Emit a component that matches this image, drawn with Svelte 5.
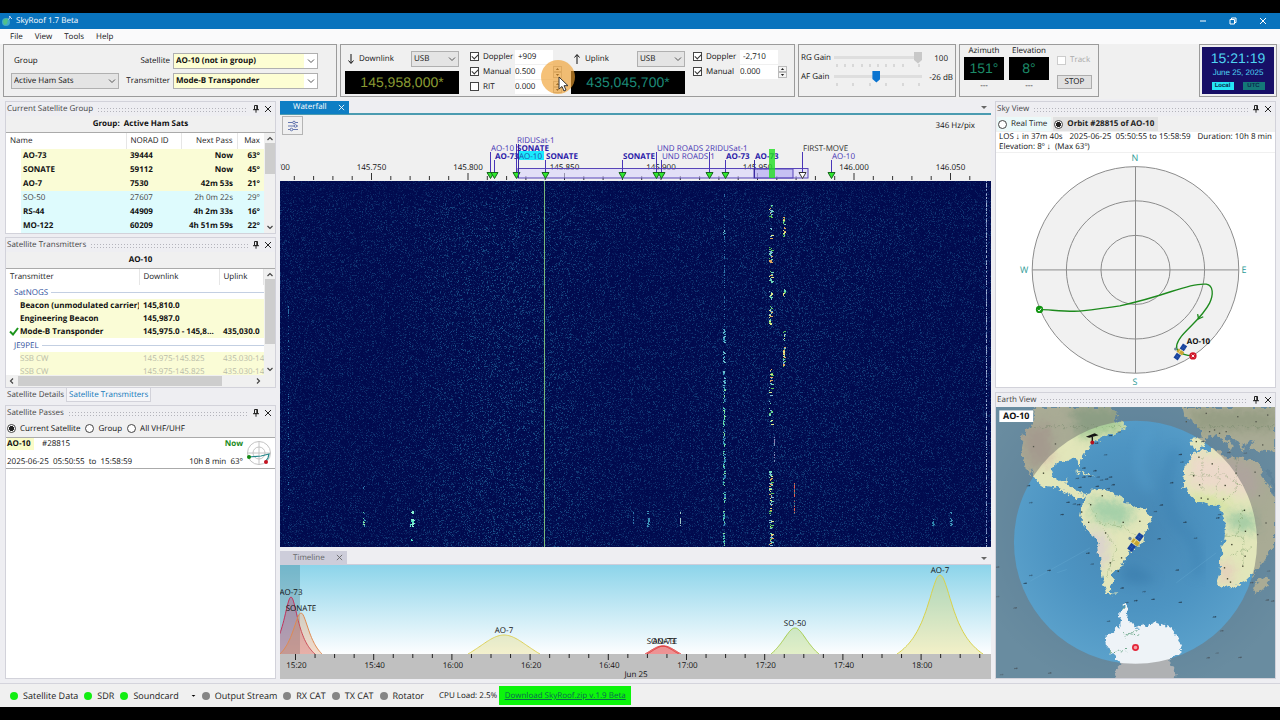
<script lang="ts">
    import { onMount } from "svelte";

    const groupSats = [
        { name: "AO-73", id: "39444", pass: "Now", max: "63°", band: "vhf" },
        { name: "SONATE", id: "59112", pass: "Now", max: "45°", band: "vhf" },
        { name: "AO-7", id: "7530", pass: "42m 53s", max: "21°", band: "vhf" },
        { name: "SO-50", id: "27607", pass: "2h 0m 22s", max: "29°", band: "uhf", dim: true },
        { name: "RS-44", id: "44909", pass: "4h 2m 33s", max: "16°", band: "uhf" },
        { name: "MO-122", id: "60209", pass: "4h 51m 59s", max: "22°", band: "uhf" },
    ];

    const transmitters = [
        {
            source: "SatNOGS",
            rows: [
                { name: "Beacon (unmodulated carrier)", down: "145,810.0", up: "" },
                { name: "Engineering Beacon", down: "145,987.0", up: "" },
                { name: "Mode-B Transponder", down: "145,975.0 - 145,8...", up: "435,030.0", active: true },
            ],
        },
        {
            source: "JE9PEL",
            rows: [
                { name: "SSB CW", down: "145.975-145.825", up: "435.030-146", dim: true },
                { name: "SSB CW", down: "145.975-145.825", up: "435.030-146", dim: true },
            ],
        },
    ];

    const statuses = [
        { label: "Satellite Data", on: true },
        { label: "SDR", on: true },
        { label: "Soundcard", on: true, menu: true },
        { label: "Output Stream", on: false },
        { label: "RX CAT", on: false },
        { label: "TX CAT", on: false },
        { label: "Rotator", on: false },
    ];

    // frequency scale, x in scale units
    const freqTicks = Array.from({ length: 37 }, (_, i) => ({
        x: -5 + i * 19.3,
        major: i % 5 === 0,
        label: (145.7 + (i / 5) * 0.05).toFixed(3),
    }));
    const markers = [
        { x: 210, top: 38 },
        { x: 214, top: 46 },
        { x: 236, top: 30 },
        { x: 265, top: 46 },
        { x: 342, top: 46 },
        { x: 376, top: 38 },
        { x: 381, top: 46 },
        { x: 429, top: 38 },
        { x: 445, top: 46 },
        { x: 522, top: 38, open: true },
        { x: 551, top: 46 },
    ];
    const markerLabels = [
        { x: 237, y: 29, text: "RIDUSat-1" },
        { x: 211, y: 37, text: "AO-10" },
        { x: 237, y: 37, text: "SONATE", bold: true },
        { x: 215, y: 45, text: "AO-73", bold: true },
        { x: 239, y: 45, text: "AO-10", lit: true },
        { x: 266, y: 45, text: "SONATE", bold: true },
        { x: 343, y: 45, text: "SONATE", bold: true },
        { x: 377, y: 37, text: "UND ROADS 2" },
        { x: 382, y: 45, text: "UND ROADS 1" },
        { x: 430, y: 37, text: "RIDUSat-1" },
        { x: 446, y: 45, text: "AO-73", bold: true },
        { x: 475, y: 45, text: "AO-73", bold: true },
        { x: 523, y: 37, text: "FIRST-MOVE", dark: true },
        { x: 552, y: 45, text: "AO-10" },
    ];

    const passes = [
        { name: "AO-73", x: 11, top: 32, half: 24, sharp: 0.3, color: "#c2325c" },
        { name: "SONATE", x: 21, top: 48, half: 21, sharp: 0.4, color: "#e08a50" },
        { name: "AO-7", x: 224, top: 70, half: 36, sharp: 0.9, color: "#ded25a" },
        { name: "AO-73", x: 384, top: 81, half: 17, sharp: 1, color: "#e03030" },
        { name: "SONATE", x: 382, top: 81, half: 17, sharp: 1, color: "#e03030" },
        { name: "SO-50", x: 515, top: 63, half: 24, sharp: 0.6, color: "#a5cc4a" },
        { name: "AO-7", x: 660, top: 10, half: 43, sharp: 0.3, color: "#d9d24a" },
    ];
    // elevation curve of a pass over the horizon at y = 89
    const passPath = (p: (typeof passes)[number]) => {
        const elevation = (u: number) => 1 / Math.sqrt(1 + (u / p.sharp) ** 2);
        const floor = elevation(1);
        const points: string[] = [];
        for (let i = -30; i <= 30; i++) {
            const e = (elevation(i / 30) - floor) / (1 - floor);
            points.push(`${(p.x + (p.half * i) / 30).toFixed(1)} ${(89 - (89 - p.top) * e).toFixed(1)}`);
        }
        return "M" + points.join("L");
    };
    const timeTicks = Array.from({ length: 36 }, (_, i) => {
        const minutes = 15 * 60 + 20 + i * 5;
        return {
            x: 15.5 + i * 19.55,
            major: i % 4 === 0,
            label: `${Math.floor(minutes / 60)}:${String(minutes % 60).padStart(2, "0")}`,
        };
    });

    // island and city name marks on the map
    const mapMarks = [
        [347, 195], [282, 235], [315, 243], [262, 266], [282, 262], [300, 260], [325, 262], [350, 268],
        [362, 262], [335, 271], [270, 293], [322, 290], [355, 297], [370, 285], [115, 288], [122, 339],
        [216, 375], [234, 338], [253, 343], [266, 345], [515, 346], [497, 366], [586, 398], [508, 448],
        [618, 446], [563, 542], [294, 491], [307, 524], [177, 543], [105, 582], [122, 558], [75, 656],
        [397, 596], [463, 607], [490, 630], [438, 634], [411, 640], [572, 639], [675, 683], [356, 696],
        [697, 725], [656, 806], [683, 792], [752, 805], [77, 838], [34, 857], [179, 852], [22, 533],
        [22, 622], [546, 279], [572, 194], [577, 217], [685, 385], [787, 580], [838, 545], [850, 635],
        [834, 632], [768, 190], [718, 188], [640, 155], [388, 126], [362, 137], [320, 160], [690, 375],
    ];
    const landMarks = [
        [160, 250], [196, 162], [130, 170], [337, 318], [302, 345], [275, 367], [296, 398], [347, 430],
        [400, 398], [450, 395], [395, 505], [361, 520], [385, 545], [612, 258], [668, 222], [707, 287],
        [655, 328], [702, 328], [740, 250], [797, 247], [810, 318], [765, 362], [768, 425], [727, 465],
        [767, 500], [760, 530], [714, 568], [723, 578], [705, 535], [628, 202], [675, 120], [710, 125],
        [650, 70], [745, 80], [800, 95], [820, 165], [835, 75], [620, 155], [660, 125], [690, 130],
        [590, 95], [830, 400], [635, 325], [630, 285], [805, 435],
    ];

    let canvas: HTMLCanvasElement;

    onMount(() => {
        const w = (canvas.width = canvas.clientWidth);
        const h = (canvas.height = canvas.clientHeight);
        const ctx = canvas.getContext("2d")!;
        let seed = 1717;
        const rnd = () => {
            seed = (seed * 1664525 + 1013904223) >>> 0;
            return seed / 4294967296;
        };
        const image = ctx.createImageData(w, h);
        for (let y = 0; y < h; y++) {
            for (let x = 0; x < w; x++) {
                const i = (y * w + x) * 4;
                const f = x / w;
                const gain = 0.45 + 0.28 * Math.exp(-Math.pow((f - 0.32) / 0.12, 2)) + 0.15 * Math.exp(-Math.pow((f - 0.72) / 0.15, 2));
                const v = Math.pow(rnd(), 6) * gain * Math.min(1, 0.55 + y / 60);
                image.data[i] = 1 + v * 36;
                image.data[i + 1] = 10 + v * 105;
                image.data[i + 2] = 78 + v * 88;
                image.data[i + 3] = 255;
            }
        }
        ctx.putImageData(image, 0, 0);

        const trace = (x: number, spans: number[][], colors: string[], spread = 1) => {
            for (const [from, to, density] of spans) {
                for (let y = from; y < to; y++) {
                    if (rnd() < density) {
                        ctx.fillStyle = colors[Math.floor(rnd() * colors.length)];
                        ctx.fillRect(x + Math.floor(rnd() * spread), y, 1 + Math.floor(rnd() * spread), 1);
                    }
                }
            }
        };
        const cool = ["#3f9fc0", "#54d4b0", "#2f78ad", "#8ae8a0"];
        const faint = ["#24609c", "#2f78ad"];
        const warm = ["#dfe98a", "#6fd8b8", "#59c85a", "#e0a860", "#7ab8d8"];
        trace(444, [[5, 48, 0.3], [56, 148, 0.35]], faint);
        trace(443, [[48, 56, 0.9], [148, 162, 0.9], [170, 182, 0.9], [190, 205, 0.8]], ["#3f9fc0", "#6cc0d0"], 2);
        trace(443, [[206, 222, 1], [226, 246, 1], [248, 266, 1], [270, 288, 1], [290, 305, 0.9], [311, 322, 1], [330, 345, 1], [352, 365, 1]], cool, 2);
        trace(489, [[24, 37, 0.9], [46, 58, 0.5], [66, 82, 1], [90, 102, 0.9], [110, 119, 0.9], [125, 144, 0.9], [188, 215, 0.7], [220, 245, 0.5], [290, 325, 0.9], [325, 350, 0.5], [352, 365, 1]], warm, 3);
        trace(503, [[36, 44, 0.9], [46, 56, 0.7], [108, 116, 1], [150, 160, 0.8], [166, 186, 1]], warm, 2);
        trace(514, [[302, 333, 0.6]], ["#a83a58", "#e06050", "#3d8a90"]);
        trace(494, [[255, 282, 0.6]], ["#8d7bb0", "#7294b8"]);
        trace(706, [[0, h, 0.7]], ["#9fb2d2", "#6b80b8"]);
        trace(8, [[125, 133, 0.8], [133, h, 0.15]], ["#2c6ea5"]);
        trace(83, [[305, 308, 1], [331, 333, 1], [337, 346, 1]], cool, 2);
        trace(130, [[330, 333, 1], [338, 346, 1], [338, 346, 1], [358, 360, 1]], ["#4de0c0", "#86f0d0"], 3);
        trace(367, [[330, 333, 0.6], [337, 346, 1]], ["#3d93b8"], 2);
        trace(400, [[331, 333, 1], [337, 346, 0.9]], ["#9fc8c8"]);
        trace(353, [[330, 346, 0.4]], ["#2f78ad"]);
        trace(652, [[338, 345, 0.8]], ["#2f86ad"], 2);
        trace(670, [[331, 333, 1], [337, 345, 0.9]], ["#3d93b8"], 2);
        ctx.fillStyle = "#79b87a";
        ctx.fillRect(264, 0, 1, h);
    });
</script>

{#snippet panelHead(title: string)}
    <header class="panel-head">
        <h2>{title}</h2>
        <span class="grip"></span>
        <button class="icon-btn" aria-label="Auto hide {title}">
            <svg viewBox="0 0 8 8"><path d="M2.5 .5h3v4h-3zM4.8.5v4M1 4.7h6M4 4.7v3" /></svg>
        </button>
        <button class="icon-btn" aria-label="Close {title}">
            <svg viewBox="0 0 8 8"><path d="M1 1l6 6M7 1l-6 6" /></svg>
        </button>
    </header>
{/snippet}

{#snippet chevron()}
    <svg class="chevron" viewBox="0 0 8 8"><path d="M1 2.5l3 3 3-3" /></svg>
{/snippet}

{#snippet vscroll(size: number)}
    <div class="vscroll">
        <svg viewBox="0 0 8 8"><path d="M1.5 5l2.5-2.5 2.5 2.5" /></svg>
        <span class="thumb" style="height: {size}%"></span>
        <svg viewBox="0 0 8 8"><path d="M1.5 3l2.5 2.5 2.5-2.5" /></svg>
    </div>
{/snippet}

{#snippet spinner(label: string)}
    <span class="spinner">
        <button aria-label="{label} up"><svg viewBox="0 0 8 6"><path d="M1.5 4.5L4 1.5l2.5 3z" /></svg></button>
        <button aria-label="{label} down"><svg viewBox="0 0 8 6"><path d="M1.5 1.5L4 4.5l2.5-3z" /></svg></button>
    </span>
{/snippet}

{#snippet satellite()}
    <g>
        <rect x="-30" y="-9" width="21" height="18" fill="#17429c" />
        <rect x="9" y="-9" width="21" height="18" fill="#17429c" />
        <path d="M-19 -9v18M19 -9v18M-30 0h21M9 0h21" stroke="#3d6cc4" stroke-width="1" />
        <rect x="-7" y="-12" width="14" height="24" rx="2" fill="#c9a634" />
        <path d="M-7 -3h14" stroke="#efe08a" stroke-width="3" />
        <circle cx="-1" cy="-20" r="5" fill="#6f8794" />
    </g>
{/snippet}

<div class="app">
    <div class="titlebar">
        <svg class="logo" viewBox="0 0 12 12">
            <circle cx="5" cy="7" r="4" fill="#3fa9c9" />
            <path d="M2 6a3.5 3.5 0 0 1 5-2l-1 5-3 1z" fill="#4fc08a" />
            <path d="M8 1l3 3M9.5 1.5l-2 3" stroke="#c9d6ef" />
        </svg>
        <h1>SkyRoof 1.7 Beta</h1>
        <button aria-label="Minimize"><svg viewBox="0 0 10 10"><path d="M2 5h6" /></svg></button>
        <button aria-label="Restore"><svg viewBox="0 0 10 10"><path d="M2 3.5h4.5V8H2zM3.5 3.5V2H8v4.5H6.5" /></svg></button>
        <button aria-label="Close"><svg viewBox="0 0 10 10"><path d="M2 2l6 6M8 2l-6 6" /></svg></button>
    </div>

    <nav class="menu">
        <button>File</button>
        <button>View</button>
        <button>Tools</button>
        <button>Help</button>
    </nav>

    <div class="toolbar">
        <section class="box selection">
            <label for="group">Group</label>
            <label class="right" for="satellite">Satellite</label>
            <span class="select lit">
                <select id="satellite"><option>AO-10 (not in group)</option></select>
                {@render chevron()}
            </span>
            <span class="select">
                <select id="group"><option>Active Ham Sats</option></select>
                {@render chevron()}
            </span>
            <label class="right" for="transmitter">Transmitter</label>
            <span class="select lit">
                <select id="transmitter"><option>Mode-B Transponder</option></select>
                {@render chevron()}
            </span>
        </section>

        <section class="box radio">
            <div class="link">
                <div class="link-top">
                    <svg class="arrow" viewBox="0 0 8 12"><path d="M4 1v9M1.5 7.5L4 10.5l2.5-3" /></svg>
                    <label for="down-mode">Downlink</label>
                    <span class="select">
                        <select id="down-mode"><option>USB</option></select>
                        {@render chevron()}
                    </span>
                </div>
                <output class="freq down">145,958,000*</output>
            </div>
            <div class="offsets">
                <label><input type="checkbox" checked />Doppler</label>
                <input class="field inset" type="text" value="+909" aria-label="Downlink Doppler" />
                <span></span>
                <label><input type="checkbox" checked />Manual</label>
                <input class="field" type="text" value="0.500" aria-label="Downlink manual" />
                {@render spinner("Manual")}
                <label><input type="checkbox" />RIT</label>
                <input class="field" type="text" value="0.000" aria-label="RIT" />
                {@render spinner("RIT")}
            </div>
            <div class="link">
                <div class="link-top">
                    <svg class="arrow" viewBox="0 0 8 12"><path d="M4 11V2M1.5 4.5L4 1.5l2.5 3" /></svg>
                    <label for="up-mode">Uplink</label>
                    <span class="select">
                        <select id="up-mode"><option>USB</option></select>
                        {@render chevron()}
                    </span>
                </div>
                <output class="freq up">435,045,700*</output>
            </div>
            <div class="offsets uplink">
                <label><input type="checkbox" checked />Doppler</label>
                <input class="field inset" type="text" value="-2,710" aria-label="Uplink Doppler" />
                <span></span>
                <label><input type="checkbox" checked />Manual</label>
                <input class="field" type="text" value="0.000" aria-label="Uplink manual" />
                {@render spinner("Uplink manual")}
            </div>
            <div class="pointer">
                <svg viewBox="0 0 34 34">
                    <circle cx="17" cy="17" r="17" fill="#f0a030" fill-opacity=".65" />
                    <path d="M18 17v12l3-2.5 2 4.5 2-1-2-4.3h4z" fill="#fff" stroke="#333" />
                </svg>
            </div>
        </section>

        <section class="box gains">
            <label for="rg">RG Gain</label>
            <div class="slider">
                <input id="rg" type="range" value="100" disabled />
                <svg viewBox="0 0 88 4"><path d="M3 0v3M11 0v3M19 0v3M28 0v3M36 0v3M44 0v3M52 0v3M60 0v3M69 0v3M85 0v3" /></svg>
            </div>
            <output>100</output>
            <label for="af">AF Gain</label>
            <div class="slider">
                <input id="af" type="range" value="48" />
                <svg viewBox="0 0 88 4"><path d="M3 0v3M19 0v3M36 0v3M52 0v3M69 0v3M85 0v3" /></svg>
            </div>
            <output>-26 dB</output>
        </section>

        <section class="box rotator">
            <div class="angle"><span>Azimuth</span><output>151°</output><span>---</span></div>
            <div class="angle"><span>Elevation</span><output>8°</output><span>---</span></div>
            <div class="track">
                <label><input type="checkbox" disabled />Track</label>
                <button>STOP</button>
            </div>
        </section>

        <section class="box clock">
            <div class="face">
                <time>15:21:19</time>
                <span>June 25, 2025</span>
                <div><button class="on">Local</button><button>UTC</button></div>
            </div>
        </section>
    </div>

    <main>
        <div class="column left">
            <section class="panel">
                {@render panelHead("Current Satellite Group")}
                <h3>Group:&nbsp; Active Ham Sats</h3>
                <div class="list">
                    <table class="group-table">
                        <thead>
                            <tr><th class="name">Name</th><th>NORAD ID</th><th class="num pass">Next Pass</th><th class="num max">Max</th></tr>
                        </thead>
                        <tbody>
                            {#each groupSats as sat}
                                <tr class={sat.band} class:dim={sat.dim}>
                                    <td>{sat.name}</td>
                                    <td>{sat.id}</td>
                                    <td class="num">{sat.pass}</td>
                                    <td class="num">{sat.max}</td>
                                </tr>
                            {/each}
                        </tbody>
                    </table>
                    {@render vscroll(32)}
                </div>
            </section>

            <section class="panel transmitters">
                {@render panelHead("Satellite Transmitters")}
                <h3>AO-10</h3>
                <div class="list">
                    <div class="clip">
                        <table class="tx-table">
                            <thead>
                                <tr><th class="name">Transmitter</th><th class="down-col">Downlink</th><th>Uplink</th></tr>
                            </thead>
                            <tbody>
                                {#each transmitters as group}
                                    <tr class="source"><td colspan="3"><div>{group.source}</div></td></tr>
                                    {#each group.rows as row}
                                        <tr class="vhf" class:faded={row.dim}>
                                            <td>
                                                {#if row.active}
                                                    <svg class="tick" viewBox="0 0 10 10"><path d="M1 5.5l3 3L9 2" /></svg>
                                                {/if}
                                                {row.name}
                                            </td>
                                            <td>{row.down}</td>
                                            <td>{row.up}</td>
                                        </tr>
                                    {/each}
                                {/each}
                            </tbody>
                        </table>
                    </div>
                    {@render vscroll(64)}
                </div>
                <div class="hscroll">
                    <svg viewBox="0 0 8 8"><path d="M5 1.5L2.5 4 5 6.5" /></svg>
                    <span class="thumb"></span>
                    <svg viewBox="0 0 8 8"><path d="M3 1.5L5.5 4 3 6.5" /></svg>
                </div>
            </section>
            <div class="tabs">
                <button>Satellite Details</button>
                <button class="on">Satellite Transmitters</button>
            </div>

            <section class="panel passes">
                {@render panelHead("Satellite Passes")}
                <div class="radios">
                    <label><input type="radio" name="scope" checked />Current Satellite</label>
                    <label><input type="radio" name="scope" />Group</label>
                    <label><input type="radio" name="scope" />All VHF/UHF</label>
                </div>
                <div class="pass-list">
                    <article class="pass-item">
                        <div class="pass-text">
                            <p><b class="tag">AO-10</b><span>#28815</span><b class="now">Now</b></p>
                            <p><span>2025-06-25&nbsp; 05:50:55&nbsp; to&nbsp; 15:58:59</span><span class="now">10h 8 min&nbsp; 63°</span></p>
                        </div>
                        <svg viewBox="0 0 26 26">
                            <g fill="none" stroke="#c4c4c4"><circle cx="13" cy="13" r="11.5" /><circle cx="13" cy="13" r="6" /><path d="M13 1v24M1 13h24" /></g>
                            <path d="M3 17l12-1 8-2-1 4-3 4" fill="none" stroke="#24878a" stroke-width="1.2" />
                            <circle cx="3" cy="17" r="2" fill="#128a12" />
                            <circle cx="20" cy="22" r="2" fill="#c4121f" />
                        </svg>
                    </article>
                </div>
            </section>
        </div>

        <div class="column center">
            <div class="doc-tabs">
                <button class="doc on">Waterfall<svg viewBox="0 0 8 8"><path d="M1 1l6 6M7 1l-6 6" /></svg></button>
                <svg class="more" viewBox="0 0 8 8"><path d="M1 3h6L4 6z" /></svg>
            </div>
            <div class="wf-head">
                <button aria-label="Waterfall settings">
                    <svg viewBox="0 0 12 12">
                        <path d="M1 2.5h10M1 6h10M1 9.5h10" />
                        <circle cx="7" cy="2.5" r="1.3" /><circle cx="8.5" cy="6" r="1.3" /><circle cx="4.5" cy="9.5" r="1.3" />
                    </svg>
                </button>
                <span>346 Hz/pix</span>
            </div>
            <svg class="scale" viewBox="0 22 711 45">
                {#each freqTicks as t}
                    <path d="M{t.x} {t.major ? 59 : 62}V66" stroke="#333" />
                    {#if t.major}<text x={t.x} y="56" text-anchor="middle">{t.label}</text>{/if}
                {/each}
                <rect x="238" y="54.5" width="290" height="9.5" fill="#d9d4fb" fill-opacity=".6" stroke="#5744b8" />
                <rect x="474" y="55" width="39" height="9" fill="#9d90ee" fill-opacity=".4" stroke="#5744b8" />
                <rect x="239" y="37" width="25" height="9" fill="#19eaff" />
                {#each markers as m}
                    <path d="M{m.x + 0.5} {m.top}V58" stroke="#4a36b8" />
                    <path d="M{m.x - 3} 58.5h7l-3.5 6z" fill={m.open ? "#fff" : "#2fe82f"} stroke={m.open ? "#333" : "#16651c"} />
                {/each}
                <path d="M238.5 30V64M474.5 46V64" stroke="#3a2aa0" />
                {#each markerLabels as l}
                    <text x={l.x} y={l.y} class="mark" class:bold={l.bold} class:dark={l.dark} class:hl={l.lit}>{l.text}</text>
                {/each}
                <rect x="489" y="35" width="6" height="29" fill="#20e020" fill-opacity=".8" />
            </svg>
            <canvas bind:this={canvas} class="waterfall"></canvas>

            <div class="doc-tabs timeline-tabs">
                <button class="doc">Timeline<svg viewBox="0 0 8 8"><path d="M1 1l6 6M7 1l-6 6" /></svg></button>
                <svg class="more" viewBox="0 0 8 8"><path d="M1 3h6L4 6z" /></svg>
            </div>
            <svg class="timeline" viewBox="0 0 711 114">
                <defs>
                    <linearGradient id="sky" x1="0" y1="0" x2="0" y2="1">
                        <stop offset="0" stop-color="#8cd4ea" />
                        <stop offset="1" stop-color="#fdfeff" />
                    </linearGradient>
                </defs>
                <rect width="711" height="89" fill="url(#sky)" />
                <rect width="20" height="89" fill="#4c8a9c" fill-opacity=".4" />
                {#each passes as p}
                    <path d={passPath(p)} fill={p.color} fill-opacity=".3" stroke={p.color} />
                {/each}
                <rect y="89" width="711" height="25" fill="#c0c0c0" />
                {#each passes as p}
                    <text x={p.x} y={p.top - 2} text-anchor="middle">{p.name}</text>
                {/each}
                {#each timeTicks as t}
                    <path d="M{t.x} 89V{t.major ? 95 : 93}" stroke="#222" />
                    {#if t.major}<text x={t.x + 1} y="103" text-anchor="middle">{t.label}</text>{/if}
                {/each}
                <text x="356" y="112" text-anchor="middle">Jun 25</text>
            </svg>
        </div>

        <div class="column right-col">
            <section class="panel">
                {@render panelHead("Sky View")}
                <div class="radios sky-radios">
                    <label class="live"><input type="radio" name="sky" />Real Time</label>
                    <label class="orbit"><input type="radio" name="sky" checked />Orbit #28815 of AO-10</label>
                </div>
                <div class="sky-info">
                    <p><span>LOS ↓ in 37m 40s</span><span>2025-06-25&nbsp; 05:50:55 to 15:58:59</span><span>Duration: 10h 8 min</span></p>
                    <p>Elevation: 8º ↓&nbsp; (Max 63º)</p>
                </div>
                <svg class="sky" viewBox="17 163 840 705">
                    <g fill="none" stroke="#8c8c8c" stroke-width="3">
                        <circle cx="437" cy="515" r="311" fill="#f1f1f1" />
                        <circle cx="437" cy="515" r="208" />
                        <circle cx="437" cy="515" r="104" />
                        <path d="M126 515H748M437 204V826" />
                    </g>
                    <g class="compass" text-anchor="middle">
                        <text x="435" y="187">N</text>
                        <text x="435" y="862">S</text>
                        <text x="102" y="523">W</text>
                        <text x="764" y="523">E</text>
                    </g>
                    <path
                        d="M148 634C190 636 230 641 268 639C310 634 350 629 390 623C450 610 500 595 545 580C590 565 625 555 650 558C672 562 672 590 660 615C640 655 600 685 575 715C562 732 556 750 566 760C578 771 590 773 608 773"
                        fill="none"
                        stroke="#1d8a1d"
                        stroke-width="4"
                    />
                    <path d="M624 648l3 14 14-6" fill="none" stroke="#1d8a1d" stroke-width="4" />
                    <circle cx="148" cy="634" r="11" fill="#129512" />
                    <path d="M143 635l4 4 6-8" fill="none" stroke="#fff" stroke-width="3" />
                    <g transform="translate(572 762) rotate(-56) scale(.85)">{@render satellite()}</g>
                    <circle cx="610" cy="774" r="11" fill="#d01528" />
                    <path d="M606 770l8 8M614 770l-8 8" stroke="#fff" stroke-width="3" />
                    <text class="sat-name" x="591" y="738">AO-10</text>
                </svg>
            </section>

            <section class="panel earth-panel">
                {@render panelHead("Earth View")}
                <svg class="earth" viewBox="17 50 840 817" preserveAspectRatio="xMidYMid slice">
                    <defs>
                        <radialGradient id="ocean" cx=".5" cy=".45" r=".6">
                            <stop offset="0" stop-color="#4585b2" />
                            <stop offset=".5" stop-color="#4d94c2" />
                            <stop offset="1" stop-color="#62a8d0" />
                        </radialGradient>
                        <filter id="coast" color-interpolation-filters="sRGB">
                            <feTurbulence type="fractalNoise" baseFrequency=".06" numOctaves="3" seed="4" />
                            <feDisplacementMap in="SourceGraphic" scale="26" xChannelSelector="R" yChannelSelector="G" />
                        </filter>
                        <filter id="soft" color-interpolation-filters="sRGB"><feGaussianBlur stdDeviation="16" /></filter>
                        <clipPath id="land">
                            <path d="M135 50L128 100L100 135L92 175L105 230L124 262L118 232L135 262L152 288L195 292L222 305L245 320L275 325L290 316L262 310L245 290L226 284L232 262L212 275L192 262L184 235L210 215L240 205L258 208L268 232L272 208L290 180L305 160L330 146L370 130L400 118L402 95L372 95L385 75L365 50z" />
                            <path d="M288 315L300 300L330 298L365 305L395 325L420 342L440 358L470 362L488 378L480 400L468 420L462 450L440 475L418 488L400 515L385 540L370 545L368 580L358 602L380 617L350 610L338 570L332 520L328 470L318 440L292 425L276 400L267 380L272 355L285 335z" />
                            <path d="M608 195L625 183L680 178L700 196L722 208L745 200L805 215L830 275L857 330V470L825 505L800 545L770 575L735 592L700 595L680 580L694 540L695 490L706 440L704 385L690 345L660 345L620 335L592 308L580 280L584 240z" />
                            <path d="M857 185V50H575L582 78L605 95L628 112L640 140L602 143L604 172L630 178L646 158L648 142L680 135L712 160L722 185L730 168L705 138L728 138L750 165L760 182L770 152L800 152L775 175L810 182z" />
                            <path d="M790 612L798 580L835 560L845 572L820 600zM250 245l35 4 25 12-30-6z" />
                        </clipPath>
                    </defs>
                    <rect x="17" y="50" width="840" height="817" fill="url(#ocean)" />
                    <g filter="url(#soft)" fill="none" opacity=".5">
                        <path d="M390 560Q430 600 500 570Q440 520 410 530z" fill="#3577a8" />
                        <path d="M560 180Q500 300 560 400Q640 460 620 560" stroke="#3a7fb0" stroke-width="26" />
                        <path d="M480 120Q420 220 480 300" stroke="#5aa4d2" stroke-width="20" />
                    </g>
                    <path d="M120 575L300 475M560 580L680 490M200 550l30-10" stroke="#6fb3d8" stroke-width="2" opacity=".4" />
                    <g filter="url(#coast)">
                        <g clip-path="url(#land)">
                            <rect x="17" y="50" width="840" height="600" fill="#e2e6ba" />
                            <g filter="url(#soft)">
                                <path d="M300 325L400 335L440 380L390 410L310 390z" fill="#a4cfa8" />
                                <path d="M600 190L720 205L800 230L810 320L600 290z" fill="#ecd9ca" />
                                <path d="M710 370L800 370L800 430L720 420z" fill="#a4cca4" />
                                <path d="M600 320L720 345L720 360L610 345z" fill="#c8e08a" />
                                <path d="M270 400L350 440L350 530L320 530L300 430z" fill="#d9cfd0" />
                                <path d="M90 120L180 100L190 220L120 230z" fill="#d8c4ac" />
                                <path d="M240 50H400V130L270 150z" fill="#a8cb98" />
                                <path d="M590 60H857V120H620z" fill="#bccb98" />
                                <path d="M690 520h40v60h-40z" fill="#e5cdbc" />
                            </g>
                            <path d="M20 110H857M300 340L330 400L400 410L440 440M640 200V300M690 230L680 320M740 200V300L700 340M600 255H700L760 290M705 440H760V520M720 500L790 470M340 420L380 480L350 560M760 360L740 440" fill="none" stroke="#759a62" stroke-width="2" stroke-dasharray="7 4" opacity=".7" />
                        </g>
                        <path d="M822 235l18 28 10 42 10 5v-20l-12-40z" fill="#4d94c2" />
                        <path d="M345 750L385 712L393 660L408 640L414 690L437 716L500 697L542 716L580 765L565 795L538 815L557 838L550 880H378L370 845L395 822L362 790L348 768z" fill="#eef3f7" />
                        <path d="M397 655l8-14M400 730l50 8M360 788l50-4M440 720l-30 20" fill="none" stroke="#63a283" stroke-width="3" stroke-dasharray="6 5" />
                    </g>
                    <g fill="#23384a">
                        {#each mapMarks as [x, y], i}
                            <path d="M{x - 6} {y + 1}l3 -3 2 1 3 -2 3 1v3l-4 1-2-1-4 1z" opacity={i % 3 ? 0.8 : 0.5} />
                        {/each}
                        {#each landMarks as [x, y]}
                            <rect x={x - 2} y={y - 2} width="4" height="4" fill="#3b3f2a" />
                        {/each}
                    </g>
                    <path d="M17 50H857V867H17zM71 458a366 366 0 1 0 732 0a366 366 0 1 0 -732 0z" fill="#6f6f6f" fill-opacity=".5" fill-rule="evenodd" />
                    <path d="M294 140l20-8 6 3-22 6zM307 138v18" fill="none" stroke="#111" stroke-width="4" />
                    <circle cx="307" cy="158" r="6" fill="#b3121f" />
                    <circle cx="437" cy="775" r="8" fill="#f7a0a6" stroke="#e3263a" stroke-width="5" />
                    <g transform="translate(437 458) rotate(-53)">{@render satellite()}</g>
                    <rect x="27" y="61" width="102" height="35" fill="#fff" />
                    <text class="earth-name" x="78" y="88" text-anchor="middle">AO-10</text>
                </svg>
            </section>
        </div>
    </main>

    <footer class="status">
        {#each statuses as s}
            <span class="state" class:on={s.on}>
                <i></i>{s.label}
                {#if s.menu}<svg viewBox="0 0 8 8"><path d="M1 3h6L4 6z" /></svg>{/if}
            </span>
        {/each}
        <span class="cpu">CPU Load: 2.5%</span>
        <a href="#download">Download SkyRoof.zip v.1.9 Beta</a>
    </footer>
</div>

<style>
    :global(body) {
        margin: 0;
        background: #000;
    }
    .app,
    .app * {
        box-sizing: border-box;
    }
    .app {
        min-height: 100vh;
        display: flex;
        flex-direction: column;
        background: #eeeef2;
        border: solid #000;
        border-width: 13px 0;
        font: 8px/12px "Open Sans", "Noto Sans", sans-serif;
        text-rendering: geometricPrecision;
        color: #111;
    }
    h1,
    h2,
    h3,
    p {
        margin: 0;
        font: inherit;
    }
    button,
    input,
    select {
        font: inherit;
        color: inherit;
        margin: 0;
        padding: 0;
        border: none;
        background: none;
        border-radius: 0;
        text-rendering: inherit;
    }
    svg {
        display: block;
    }
    text {
        font-size: 8px;
        fill: #111;
    }

    .titlebar {
        display: flex;
        align-items: center;
        height: 16px;
        background: #0973bd;
        color: #fff;
    }
    .titlebar h1 {
        flex: 1;
        margin-left: 3px;
        font-size: 8px;
    }
    .logo {
        width: 12px;
        height: 12px;
        margin-left: 1px;
    }
    .titlebar button {
        width: 30px;
        display: flex;
        justify-content: center;
    }
    .titlebar button svg {
        width: 10px;
        height: 10px;
        fill: none;
        stroke: #fff;
    }
    .titlebar button:last-child {
        margin-right: 2px;
    }

    .menu {
        display: flex;
        gap: 12px;
        padding: 0 10px;
        height: 15px;
        background: #fafafb;
    }

    .toolbar {
        display: flex;
        gap: 3px;
        padding: 0 3px 2px;
        background: #f0f0f0;
    }
    .box {
        border: 1px solid #9b9b9b;
        height: 53px;
    }
    .select {
        position: relative;
        display: block;
        height: 16px;
        border: 1px solid #b0b0b0;
        background: #e4e4e4;
    }
    .select select {
        appearance: none;
        width: 100%;
        height: 14px;
        padding: 0 14px 0 2px;
        display: block;
    }
    .select.lit {
        background: #fff;
    }
    .select.lit select {
        background: linear-gradient(to left, #fff 13px, #fdfed3 13px);
        font-weight: 700;
    }
    .chevron {
        position: absolute;
        right: 2px;
        top: 3px;
        width: 8px;
        height: 8px;
        fill: none;
        stroke: #555;
        pointer-events: none;
    }
    .selection {
        flex: 0 0 334px;
        display: grid;
        grid-template-columns: 108px 1fr 145px;
        grid-template-rows: 16px 16px;
        gap: 4px 3px;
        align-content: center;
        align-items: center;
        padding: 0 18px 0 7px;
    }
    .selection label {
        padding-left: 3px;
    }
    .selection .right {
        padding-left: 0;
        text-align: right;
    }

    .radio {
        position: relative;
        flex: 0 0 455px;
        display: flex;
        padding: 4px 4px 1px;
    }
    .link {
        width: 114px;
    }
    .link-top {
        display: flex;
        align-items: center;
        height: 20px;
    }
    .link-top label {
        flex: 1;
    }
    .link-top .select {
        width: 48px;
    }
    .arrow {
        width: 8px;
        height: 12px;
        margin: 0 4px 0 2px;
        fill: none;
        stroke: #111;
    }
    .freq {
        display: block;
        margin-top: 2px;
        height: 23px;
        background: #000;
        text-align: center;
        font: 14px/23px "Liberation Sans", Arial, sans-serif;
    }
    .down {
        color: #8a9c33;
    }
    .up {
        color: #1c8a78;
    }
    .offsets {
        display: grid;
        grid-template-columns: 45px 38px 9px;
        grid-auto-rows: 15px;
        margin: 0 9px 0 11px;
        align-items: center;
    }
    .offsets.uplink {
        grid-template-columns: 47px 38px 9px;
        margin: 0 2px 0 8px;
    }
    .offsets label,
    .track label,
    .radios label {
        display: flex;
        align-items: center;
        gap: 4px;
    }
    input[type="checkbox"] {
        appearance: none;
        display: block;
        width: 9px;
        height: 9px;
        flex: none;
        border: 1px solid #444;
        background: #fff;
    }
    input[type="checkbox"]:checked::after {
        content: "";
        display: block;
        width: 5px;
        height: 3px;
        margin: 1px;
        border: solid #333;
        border-width: 0 0 1px 1px;
        transform: rotate(-45deg);
    }
    input[type="checkbox"]:disabled {
        border-color: #ccc;
    }
    .field {
        width: 100%;
        height: 14px;
        background: #fff;
    }
    .inset {
        padding-left: 3px;
    }
    .spinner {
        display: flex;
        flex-direction: column;
        width: 9px;
    }
    .spinner button {
        height: 6px;
        border: 1px solid #bbb;
        background: #f4f4f4;
    }
    .spinner svg {
        width: 7px;
        height: 4px;
        fill: #222;
    }
    .pointer {
        position: absolute;
        left: 200px;
        top: 15px;
        width: 34px;
        pointer-events: none;
    }

    .gains {
        flex: 0 0 158px;
        display: grid;
        grid-template-columns: 33px 88px 1fr;
        grid-auto-rows: 19px;
        align-content: center;
        padding: 0 2px;
    }
    .gains > label {
        white-space: nowrap;
    }
    .gains > output {
        text-align: right;
        line-height: 14px;
        white-space: nowrap;
    }
    .gains > output:first-of-type {
        padding-right: 5px;
    }
    .slider input {
        appearance: none;
        display: block;
        width: 100%;
        height: 12px;
        background: linear-gradient(#dedede, #dedede) center / 100% 3px no-repeat;
    }
    .slider input::-webkit-slider-thumb {
        appearance: none;
        width: 8px;
        height: 12px;
        background: #0a74d0;
        clip-path: polygon(0 0, 100% 0, 100% 70%, 50% 100%, 0 70%);
    }
    .slider input:disabled::-webkit-slider-thumb {
        background: #c8c8c8;
    }
    .slider svg {
        height: 4px;
        stroke: #c0c0c0;
    }

    .rotator {
        flex: 0 0 140px;
        display: flex;
        gap: 5px;
        padding: 0 4px;
    }
    .angle {
        width: 40px;
        display: flex;
        flex-direction: column;
        text-align: center;
    }
    .angle output {
        height: 23px;
        background: #000;
        color: #1c8a68;
        font: 14px/23px "Liberation Sans", Arial, sans-serif;
    }
    .track {
        flex: 1;
        padding: 9px 1px 0 3px;
        color: #aaa;
    }
    .track button {
        display: block;
        width: 35px;
        height: 14px;
        margin-top: 9px;
        border: 1px solid #adadad;
        background: #e1e1e1;
        color: #111;
    }

    .clock {
        flex: 0 0 78px;
        margin-left: auto;
        padding: 2px;
    }
    .face {
        height: 47px;
        background: #170f66;
        color: #4fd4f2;
        display: flex;
        flex-direction: column;
        align-items: center;
        font: 8px/11px "Liberation Sans", Arial, sans-serif;
        padding-top: 3px;
    }
    .face time {
        font-size: 14px;
        line-height: 17px;
    }
    .face div {
        display: flex;
        gap: 9px;
        margin-top: 4px;
    }
    .face button {
        width: 22px;
        height: 8px;
        background: #147878;
        color: #0b2b50;
        font-size: 6px;
        font-weight: 700;
        line-height: 8px;
    }
    .face .on {
        background: #25e6f5;
    }

    main {
        flex: 1;
        display: grid;
        grid-template-columns: 271px minmax(0, 1fr) 281px;
        gap: 4px;
        padding: 2px 4px 4px 5px;
    }
    .column {
        display: flex;
        flex-direction: column;
        min-width: 0;
    }
    .panel {
        border: 1px solid #d2d2da;
        background: #f0f0f0;
    }
    .panel-head {
        display: flex;
        align-items: center;
        gap: 4px;
        height: 14px;
        padding: 0 3px 0 1px;
        color: #444;
        background: #eeeef2;
    }
    .grip {
        flex: 1;
        height: 5px;
        background: radial-gradient(#b4b4bc 30%, transparent 35%) 0 0 / 3px 3px;
    }
    .icon-btn svg {
        width: 8px;
        height: 8px;
        fill: none;
        stroke: #222;
    }
    h3 {
        height: 16px;
        line-height: 16px;
        font-weight: 700;
        text-align: center;
        color: #111;
    }
    .list {
        display: flex;
        background: #fff;
        border-top: 1px solid #aaa;
    }
    table {
        width: 100%;
        border-collapse: collapse;
        table-layout: fixed;
        color: #111;
    }
    th,
    td {
        padding: 0 4px;
        font-weight: inherit;
        text-align: left;
        white-space: nowrap;
        overflow: hidden;
    }
    th {
        height: 16px;
        border-right: 1px solid #e6e6e6;
        color: #222;
    }
    td {
        height: 14px;
        font-weight: 700;
    }
    .num {
        text-align: right;
    }
    .group-table .name {
        width: 120px;
    }
    .group-table .pass {
        width: 56px;
    }
    .group-table .max {
        width: 27px;
        border-right: none;
    }
    .vhf {
        background: #fafcd6;
    }
    .uhf {
        background: #defbfd;
    }
    td:first-child {
        padding-left: 17px;
        background: linear-gradient(to right, #fff 15px, transparent 15px);
    }
    .dim td {
        font-weight: 400;
        color: #444;
    }
    .vscroll {
        flex: 0 0 11px;
        display: flex;
        flex-direction: column;
        align-items: center;
        justify-content: space-between;
        background: #f0f0f0;
        padding: 2px 0;
    }
    .vscroll svg,
    .hscroll svg {
        width: 8px;
        height: 8px;
        flex: none;
        fill: none;
        stroke: #444;
        stroke-width: 1.2;
    }
    .vscroll .thumb {
        width: 10px;
        background: #cdcdcd;
        margin-bottom: auto;
    }
    .transmitters {
        margin-top: 3px;
    }
    .clip {
        flex: 1;
        min-width: 0;
        height: 106px;
        overflow: hidden;
    }
    .tx-table .name {
        width: 133px;
    }
    .tx-table .down-col {
        width: 80px;
    }
    .tx-table td {
        height: 13px;
        line-height: 13px;
        padding-right: 0;
        position: relative;
    }
    .tx-table td:first-child {
        padding-left: 14px;
        background: linear-gradient(to right, #fff 14px, transparent 14px);
    }
    .tx-table .source td {
        height: 14px;
        padding-left: 8px;
        font-weight: 400;
        color: #2f4f9c;
        background: #fff;
    }
    .source div {
        display: flex;
        align-items: center;
        gap: 3px;
    }
    .source div::after {
        content: "";
        flex: 1;
        border-top: 1px solid #c3cfe2;
    }
    .faded td {
        font-weight: 400;
        color: #b9bba8;
    }
    .tick {
        position: absolute;
        left: 3px;
        top: 1px;
        width: 10px;
        height: 10px;
        fill: none;
        stroke: #1c941c;
        stroke-width: 2;
    }
    .hscroll {
        height: 12px;
        display: flex;
        align-items: center;
        gap: 2px;
        padding: 1px 13px 1px 2px;
        background: #f0f0f0;
    }
    .hscroll .thumb {
        width: 204px;
        height: 10px;
        background: #cdcdcd;
    }
    .hscroll svg:last-child {
        margin-left: auto;
    }
    .tabs {
        display: flex;
        height: 14px;
        color: #444;
    }
    .tabs button {
        padding: 0 2px;
    }
    .tabs .on {
        background: #f5f5f8;
        border: 1px solid #d2d2da;
        border-top: none;
        color: #1177b8;
    }
    .passes {
        flex: 1;
        margin-top: 3px;
        display: flex;
        flex-direction: column;
    }
    .radios {
        display: flex;
        gap: 5px;
        height: 17px;
        align-items: center;
        padding-left: 1px;
    }
    input[type="radio"] {
        appearance: none;
        display: block;
        width: 9px;
        height: 9px;
        border: 1px solid #444;
        border-radius: 50%;
        background: #fff;
    }
    input[type="radio"]:checked {
        background: radial-gradient(#222 45%, #fff 55%);
    }
    .pass-list {
        flex: 1;
        background: #fff;
        border-top: 1px solid #aaa;
    }
    .pass-item {
        display: flex;
        align-items: center;
        height: 31px;
        border-bottom: 1px solid #aaa;
    }
    .pass-item svg {
        width: 26px;
        height: 26px;
        margin: 0 3px;
    }
    .pass-text {
        flex: 1;
        display: flex;
        flex-direction: column;
        gap: 6px;
    }
    .pass-text p {
        display: flex;
        padding-left: 1px;
    }
    .tag {
        width: 27px;
        margin-right: 8px;
        background: #fafcc8;
    }
    .now {
        margin-left: auto;
    }
    b.now {
        color: #1b8a1b;
    }

    .doc-tabs {
        display: flex;
        align-items: center;
        justify-content: space-between;
        height: 14px;
        border-bottom: 2px solid #4b9bb0;
    }
    .doc {
        display: flex;
        align-items: center;
        gap: 11px;
        height: 13px;
        padding: 0 4px 0 13px;
        background: #cdcdda;
        color: #666;
    }
    .doc.on {
        background: #0e7ec4;
        color: #fff;
    }
    .doc svg {
        width: 7px;
        height: 7px;
        fill: none;
        stroke: currentColor;
    }
    .more {
        width: 8px;
        height: 8px;
        margin-right: 3px;
        fill: #666;
    }
    .wf-head {
        display: flex;
        justify-content: space-between;
        align-items: center;
        height: 21px;
        padding: 0 16px 0 2px;
        background: #f0f0f0;
    }
    .wf-head button {
        width: 21px;
        height: 19px;
        display: grid;
        place-items: center;
        border: 1px solid #b4b4b4;
    }
    .wf-head svg {
        width: 12px;
        height: 12px;
        fill: #f0f0f0;
        stroke: #6678b0;
    }
    .scale {
        width: 100%;
        background: #f0f0f0;
    }
    .mark {
        fill: #4634b4;
    }
    .mark.bold {
        font-weight: 700;
        fill: #2a1aa8;
    }
    .mark.dark {
        fill: #333;
    }
    .mark.hl {
        fill: #2050a8;
    }
    .waterfall {
        flex: 1 1 0;
        min-height: 200px;
        width: 100%;
        background: #010a4e;
    }
    .timeline-tabs {
        margin-top: 4px;
        border-bottom: 1px solid #cdcdda;
    }
    .timeline {
        width: 100%;
    }

    .sky-radios {
        gap: 2px;
        height: 16px;
        color: #222;
    }
    .sky-radios label {
        padding: 0 4px 0 1px;
        height: 14px;
    }
    .live {
        background: #ebf9f9;
    }
    .orbit {
        background: #e1e1e1;
        font-weight: 700;
    }
    .sky-info {
        padding: 0 3px;
        background: #fff;
        line-height: 10px;
        border-bottom: 1px solid #f0f0f0;
    }
    .sky-info p {
        display: flex;
        gap: 7px;
        white-space: nowrap;
    }
    .sky {
        width: 100%;
        background: #fff;
    }
    .compass text {
        font-size: 27px;
        fill: #2a9a96;
    }
    .sat-name {
        font-size: 24px;
        font-weight: 700;
    }
    .earth-panel {
        flex: 1;
        margin-top: 4px;
        display: flex;
        flex-direction: column;
    }
    .earth {
        flex: 1 1 0;
        min-height: 200px;
        width: 100%;
    }
    .earth-name {
        font-size: 27px;
        font-weight: 700;
    }

    .status {
        display: flex;
        align-items: center;
        height: 24px;
        padding-left: 10px;
        border-top: 1px solid #d4d4dc;
        background: #f0f0f0;
    }
    .state {
        display: flex;
        align-items: center;
        gap: 5px;
        margin-right: 6px;
        font-size: 9px;
        color: #222;
    }
    .state i {
        width: 8px;
        height: 8px;
        border-radius: 50%;
        background: #858585;
    }
    .state.on i {
        background: #12ee12;
    }
    .state svg {
        width: 5px;
        height: 5px;
        margin-left: 7px;
    }
    .cpu {
        margin: 0 2px 0 9px;
    }
    .status a {
        width: 132px;
        height: 19px;
        line-height: 19px;
        background: #0cf50c;
        color: #0a6a50;
        text-align: center;
    }
</style>
